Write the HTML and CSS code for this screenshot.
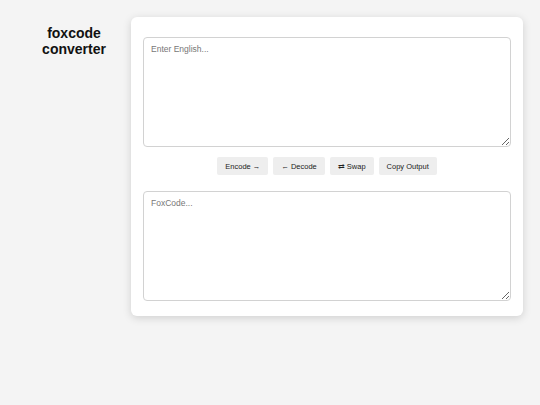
FILE: index.html
```html
<!DOCTYPE html>
<html lang="en">
<head>
    <meta charset="UTF-8">
    <meta name="viewport" content="width=device-width, initial-scale=1.0">
    <title>foxcode converter</title>
    <link rel="stylesheet" href="styles.css">
</head>
<body>
    <div class="sidebar">
        <h1>foxcode<br>converter</h1>
    </div>

    <div class="container">
        <textarea id="inputText" placeholder="Enter English..."></textarea>
        <div class="button-group">
            <button id="encodeBtn">Encode &rarr;</button>
            <button id="decodeBtn">&larr; Decode</button>
            <button id="swapBtn">&rlarr; Swap</button>
            <button id="copyBtn">Copy Output</button>
        </div>
        <textarea id="outputText" placeholder="FoxCode..."></textarea>
    </div>
</body>
</html>
```

FILE: styles.css
```css
* {
    box-sizing: border-box;
    margin: 0;
    padding: 0;
    font-family: 'Liberation Sans', Arial, sans-serif;
}

html, body {
    height: 100%;
}

body {
    background-color: #f4f4f4;
    color: #111;
    padding: 17px;
    display: flex;
    align-items: flex-start;
}

.sidebar {
    width: 114px;
    flex-shrink: 0;
    padding-top: 8px;
}

h1 {
    text-align: center;
    font-size: 14px;
    line-height: 16px;
    font-weight: 700;
}

.container {
    width: 392px;
    background-color: #fff;
    border-radius: 6px;
    box-shadow: 0 2px 8px rgba(0, 0, 0, 0.15);
    padding: 20px 12px 15px;
}

textarea {
    display: block;
    width: 100%;
    height: 110px;
    padding: 6px 7px;
    border: 1px solid #d2d2d2;
    border-radius: 4px;
    font-size: 8.5px;
    resize: vertical;
    color: #333;
}

textarea::placeholder {
    color: #777;
}

.button-group {
    display: flex;
    justify-content: center;
    gap: 5px;
    margin: 10px 0 16px;
}

button {
    height: 18px;
    padding: 0 8px;
    font-size: 7.5px;
    font-weight: 400;
    color: #222;
    background-color: #eee;
    border: none;
    border-radius: 2px;
    cursor: pointer;
}

button:hover {
    background-color: #e2e2e2;
}
```
